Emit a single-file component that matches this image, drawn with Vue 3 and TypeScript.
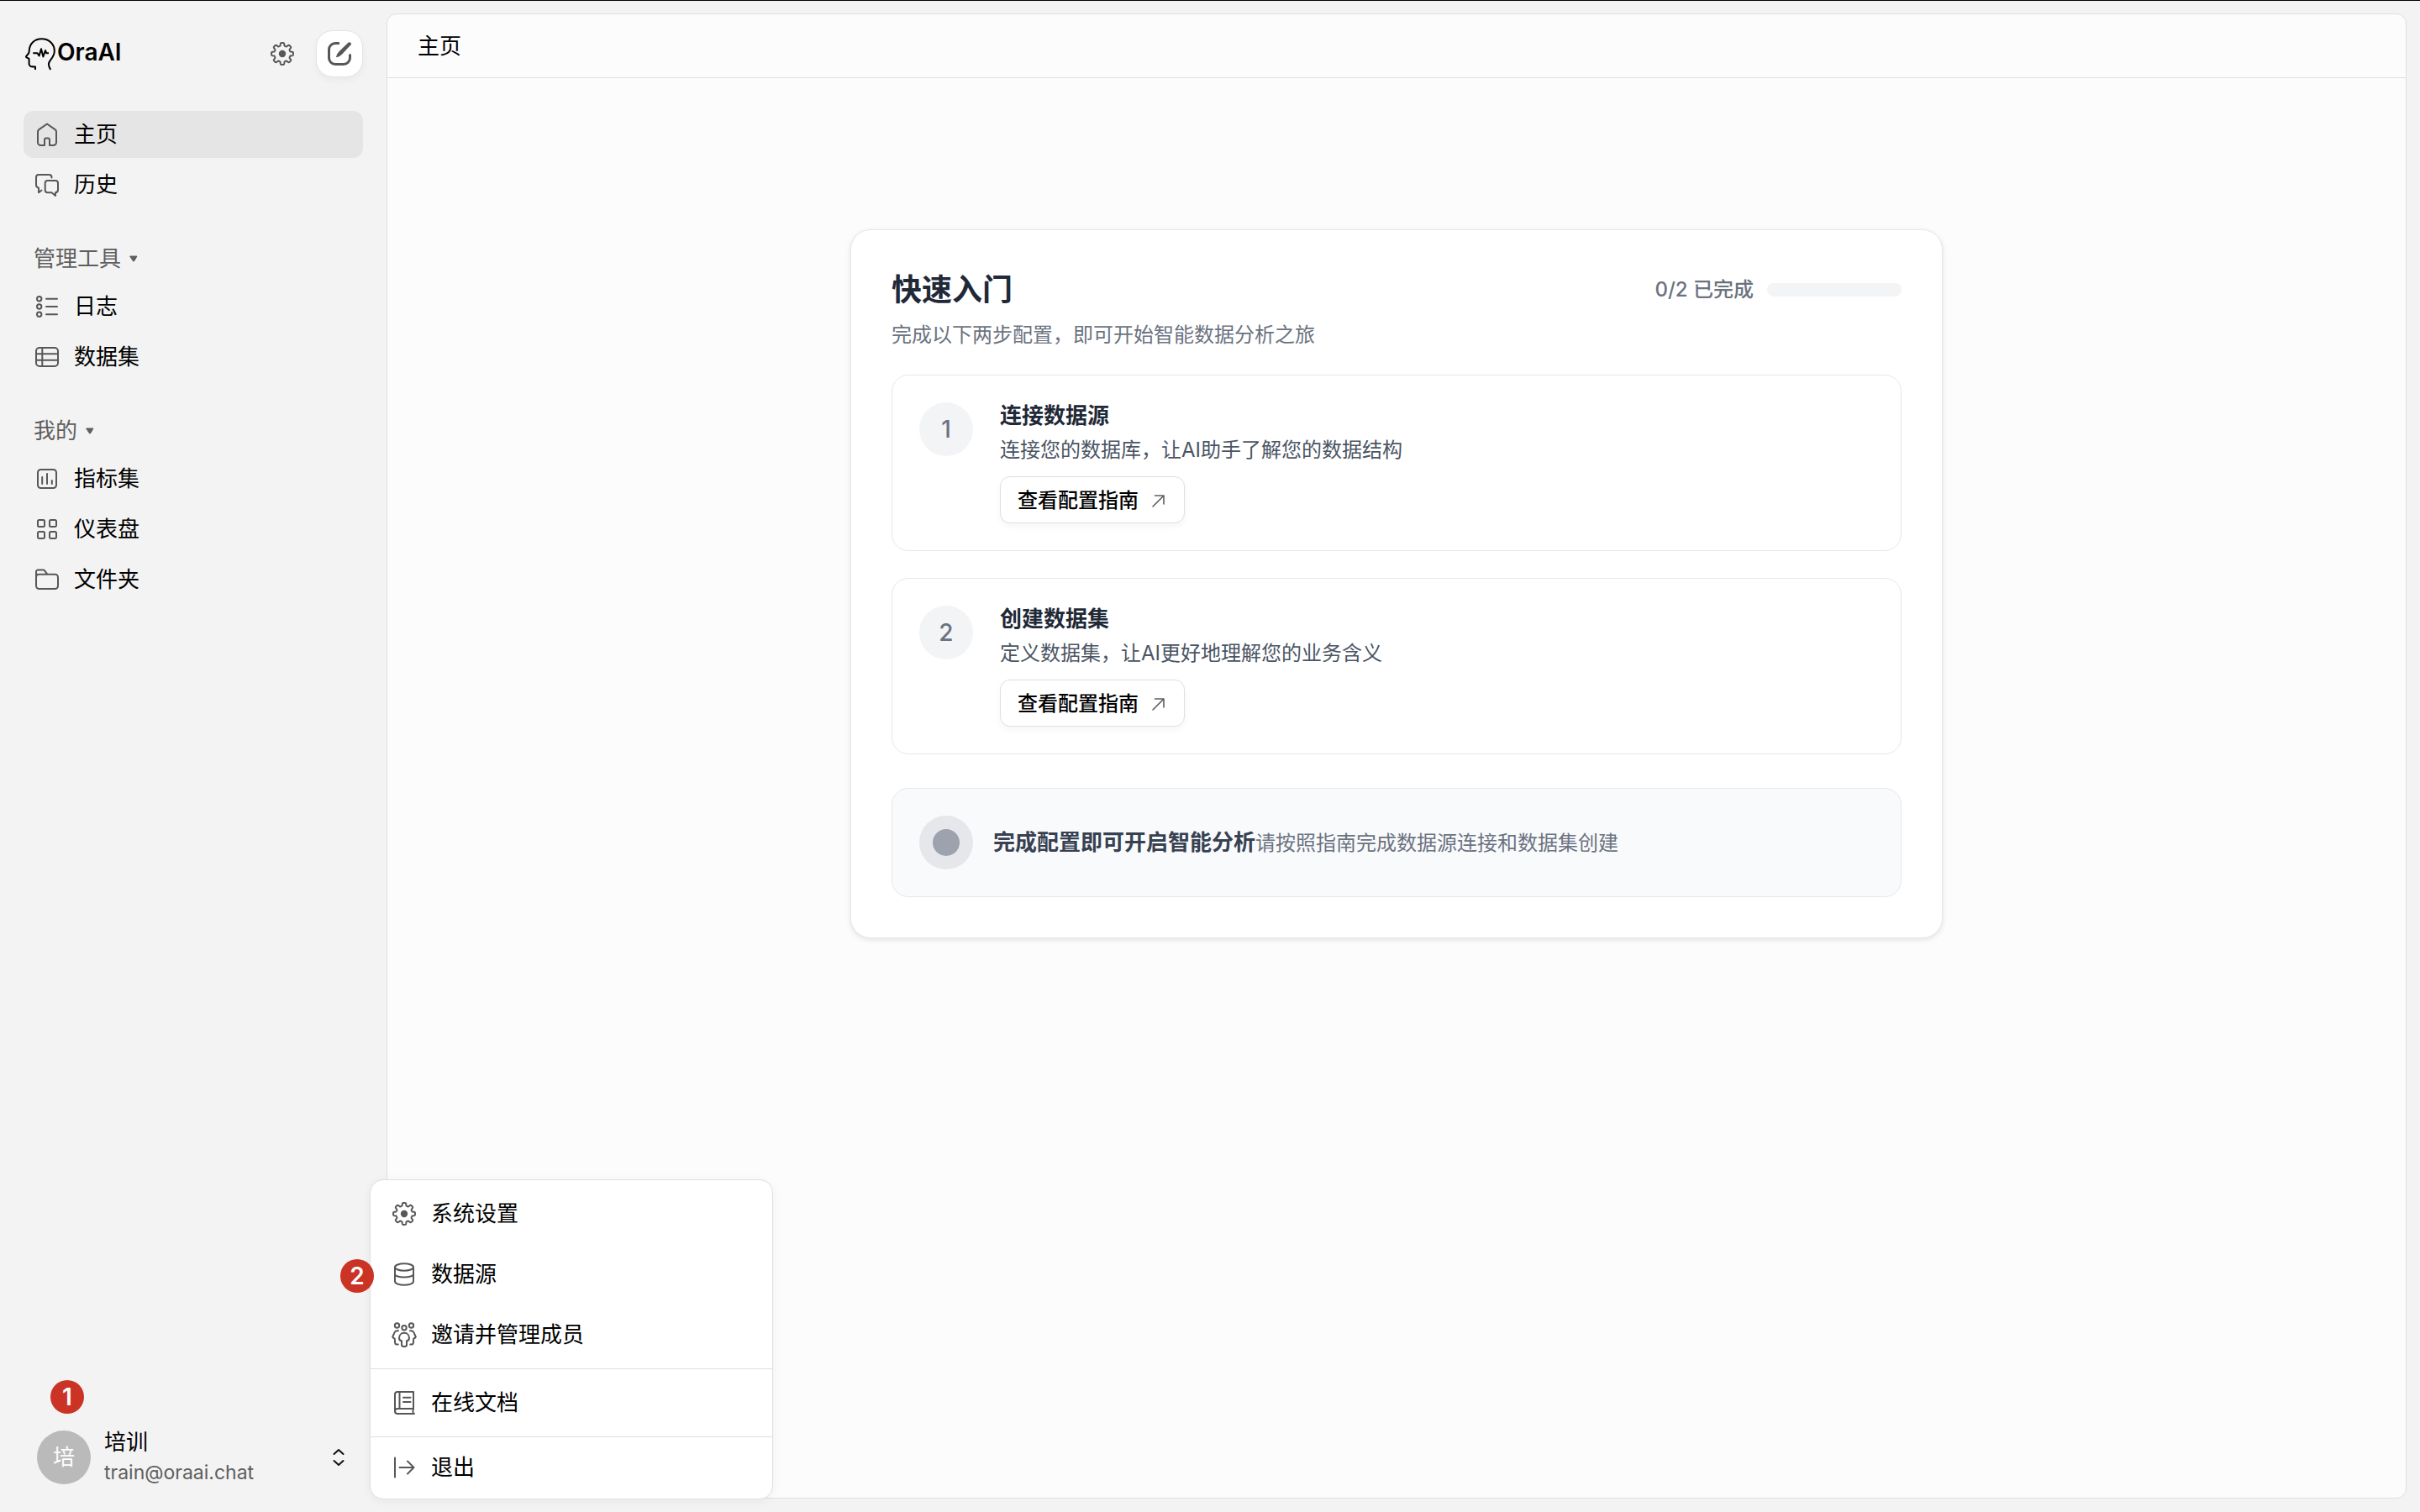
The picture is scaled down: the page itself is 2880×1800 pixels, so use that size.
<script setup lang="ts">
import { computed, ref } from 'vue'

interface NavItem {
  label: string
  icon: string[]
}

interface NavGroup {
  title?: string
  items: NavItem[]
}

interface MenuItem {
  label: string
  icon: string
  badge?: number
}

interface Step {
  title: string
  description: string
  done: boolean
}

const circle = (cx: number, cy: number, r: number): string =>
  `M${cx - r} ${cy}a${r} ${r} 0 1 0 ${2 * r} 0a${r} ${r} 0 1 0 ${-2 * r} 0z`

// Eight-toothed outline, traced in polar coordinates around (14, 14).
const gearOutline: string = (() => {
  const points: string[] = []
  const count = 192
  for (let i = 0; i < count; i++) {
    const angle = (i / count) * Math.PI * 2
    const radius = 11.3 + 1.7 * Math.tanh(2.6 * Math.cos(8 * angle) + 0.2)
    const x = 14 + radius * Math.sin(angle)
    const y = 14 - radius * Math.cos(angle)
    points.push(`${x.toFixed(2)} ${y.toFixed(2)}`)
  }
  return `M${points.join('L')}z`
})()

const groups: NavGroup[] = [
  {
    items: [
      {
        label: '主页',
        icon: ['M14 1.5L4.2 8.4Q3 9.3 3 10.8V23.5A3.5 3.5 0 0 0 6.5 27H11V20.5A2 2 0 0 1 13 18.5H15A2 2 0 0 1 17 20.5V27H21.5A3.5 3.5 0 0 0 25 23.5V10.8Q25 9.3 23.8 8.4Z'],
      },
      {
        label: '历史',
        icon: [
          'M19.5 5.5V5A3 3 0 0 0 16.5 2H4A3 3 0 0 0 1 5V14Q1 17 4 17.8V23.2L7.5 20.5',
          'M14.7 9H24A3 3 0 0 1 27 12V20Q27 23 24 23.3V27L19.5 23.3H14.7A3 3 0 0 1 11.7 20.3V12A3 3 0 0 1 14.7 9Z',
        ],
      },
    ],
  },
  {
    title: '管理工具',
    items: [
      {
        label: '日志',
        icon: [circle(4.7, 4.7, 2.7), circle(4.7, 14, 2.7), circle(4.7, 23.3, 2.7), 'M13 4.7H26M13 14H26M13 23.3H26'],
      },
      {
        label: '数据集',
        icon: ['M5 3H23A4 4 0 0 1 27 7V21A4 4 0 0 1 23 25H5A4 4 0 0 1 1 21V7A4 4 0 0 1 5 3ZM8.3 3V25M1 10.3H27M1 17.8H27'],
      },
    ],
  },
  {
    title: '我的',
    items: [
      {
        label: '指标集',
        icon: ['M6.5 3H21.5A3.5 3.5 0 0 1 25 6.5V21.5A3.5 3.5 0 0 1 21.5 25H6.5A3.5 3.5 0 0 1 3 21.5V6.5A3.5 3.5 0 0 1 6.5 3ZM8.2 12V20M14 8V20M19.8 16V20'],
      },
      {
        label: '仪表盘',
        icon: [
          'M4.5 3H9.5A1.5 1.5 0 0 1 11 4.5V9.5A1.5 1.5 0 0 1 9.5 11H4.5A1.5 1.5 0 0 1 3 9.5V4.5A1.5 1.5 0 0 1 4.5 3Z',
          'M18.5 3H23.5A1.5 1.5 0 0 1 25 4.5V9.5A1.5 1.5 0 0 1 23.5 11H18.5A1.5 1.5 0 0 1 17 9.5V4.5A1.5 1.5 0 0 1 18.5 3Z',
          'M4.5 17H9.5A1.5 1.5 0 0 1 11 18.5V23.5A1.5 1.5 0 0 1 9.5 25H4.5A1.5 1.5 0 0 1 3 23.5V18.5A1.5 1.5 0 0 1 4.5 17Z',
          'M18.5 17H23.5A1.5 1.5 0 0 1 25 18.5V23.5A1.5 1.5 0 0 1 23.5 25H18.5A1.5 1.5 0 0 1 17 23.5V18.5A1.5 1.5 0 0 1 18.5 17Z',
        ],
      },
      {
        label: '文件夹',
        icon: ['M1 11V4.5A2 2 0 0 1 3 2.5H9.5Q10.5 2.5 11.2 3.3L14.5 7.8M1 11Q1 7.8 4.2 7.8H23.5A3.5 3.5 0 0 1 27 11.3V21.5A3.5 3.5 0 0 1 23.5 25H4.5A3.5 3.5 0 0 1 1 21.5Z'],
      },
    ],
  },
]

const menuSections: MenuItem[][] = [
  [
    { label: '系统设置', icon: 'gear' },
    { label: '数据源', icon: 'database', badge: 2 },
    { label: '邀请并管理成员', icon: 'people' },
  ],
  [{ label: '在线文档', icon: 'book' }],
  [{ label: '退出', icon: 'exit' }],
]

const steps: Step[] = [
  { title: '连接数据源', description: '连接您的数据库，让AI助手了解您的数据结构', done: false },
  { title: '创建数据集', description: '定义数据集，让AI更好地理解您的业务含义', done: false },
]

const active = ref('主页')
const doneCount = computed(() => steps.filter((s) => s.done).length)
const progress = computed(() => `${(doneCount.value / steps.length) * 100}%`)
</script>

<template>
  <div class="app">
    <aside class="sidebar">
      <div class="brand-row">
        <a class="brand" href="#">
          <svg class="logo" viewBox="0 0 36 38" aria-hidden="true">
            <path d="M12 38V34.5Q8 34.5 6.5 34Q4.6 33.3 4.6 31V25.5Q4.6 24.6 3.5 24.3L1.5 23.4Q.6 22.8 1.3 21.8L4 18.5Q4.7 17.4 4.7 15.5C5 7 11 1.2 19.5 1.2C28.5 1.2 35 7.5 34.8 16C34.7 24 27.8 26.5 27.9 31.5Q28 34.5 30.2 38" />
            <path d="M9.3 18.3H14.5L16.6 21.5L19 13.2L21.4 22.5L24 15L25.3 18.3H28" />
          </svg>
          <span class="brand-name">OraAI</span>
        </a>
        <div class="brand-actions">
          <button class="icon-button" type="button" aria-label="设置">
            <svg class="icon" viewBox="0 0 28 28" aria-hidden="true">
              <path :d="gearOutline" />
              <circle class="solid" cx="14" cy="14" r="4.2" />
            </svg>
          </button>
          <button class="compose" type="button" aria-label="新建">
            <svg class="icon" viewBox="0 0 28 28" aria-hidden="true">
              <path class="thick" d="M12.8 1.5H9A7.5 7.5 0 0 0 1.5 9V19A7.5 7.5 0 0 0 9 26.5H19A7.5 7.5 0 0 0 26.5 19V15.5" />
              <path class="solid" d="M24.7 .6Q26 -.3 27.3 .8Q28.5 2 27.6 3.3L17.2 14.4Q14.3 17.4 10.9 18.2Q9.9 18.2 10.2 17Q11.2 13.5 13.8 10.9Z" />
            </svg>
          </button>
        </div>
      </div>

      <nav class="nav">
        <section v-for="(group, g) in groups" :key="g" class="group">
          <button v-if="group.title" class="group-title" type="button">
            <span>{{ group.title }}</span>
            <svg class="caret" viewBox="0 0 10 8" aria-hidden="true">
              <path d="M1 1H9L5.8 6.6Q5 7.8 4.2 6.6Z" />
            </svg>
          </button>
          <a
            v-for="item in group.items"
            :key="item.label"
            href="#"
            class="nav-item"
            :class="{ active: item.label === active }"
            @click.prevent="active = item.label"
          >
            <svg class="icon" viewBox="0 0 28 28" aria-hidden="true">
              <path v-for="(d, i) in item.icon" :key="i" :d="d" />
            </svg>
            <span>{{ item.label }}</span>
          </a>
        </section>
      </nav>

      <div class="account">
        <span class="badge account-badge">1</span>
        <button class="user" type="button">
          <span class="avatar">培</span>
          <span class="identity">
            <span class="name">培训</span>
            <span class="email">train@oraai.chat</span>
          </span>
          <svg class="updown" viewBox="0 0 14 22" aria-hidden="true">
            <path d="M1.5 7L7 2L12.5 7M1.5 15L7 20L12.5 15" />
          </svg>
        </button>

        <div class="menu" role="menu">
          <div v-for="(section, s) in menuSections" :key="s" class="menu-section">
            <button v-for="entry in section" :key="entry.label" class="menu-item" type="button" role="menuitem">
              <svg v-if="entry.icon === 'gear'" class="icon" viewBox="0 0 28 28" aria-hidden="true">
                <path :d="gearOutline" />
                <circle class="solid" cx="14" cy="14" r="4.2" />
              </svg>
              <svg v-else-if="entry.icon === 'database'" class="icon" viewBox="0 0 28 28" aria-hidden="true">
                <ellipse cx="14" cy="5.5" rx="11" ry="4.2" />
                <path d="M3 5.5V22.5C3 25 8 26.8 14 26.8S25 25 25 22.5V5.5M3 14C3 16 8 17.6 14 17.6S25 16 25 14" />
              </svg>
              <svg v-else-if="entry.icon === 'people'" class="icon wide" viewBox="0 0 30 30" aria-hidden="true">
                <circle cx="6.5" cy="4" r="2.7" />
                <circle cx="23.5" cy="4" r="2.7" />
                <circle cx="15" cy="6.7" r="2.7" />
                <path d="M15 12.8C11 12.8 9 16 9 19Q9 22 12 22.3V27.2Q12 29 15 29T18 27.2V22.3Q21 22 21 19C21 16 19 12.8 15 12.8Z" />
                <path d="M8 10.2C4 9.8 3.5 12 2.6 14.5L1.2 17.5Q2 19.3 3.7 19.5L4.2 25Q4.5 27 7.8 26.5" />
                <path d="M22 10.2C26 9.8 26.5 12 27.4 14.5L28.8 17.5Q28 19.3 26.3 19.5L25.8 25Q25.5 27 22.2 26.5" />
              </svg>
              <svg v-else-if="entry.icon === 'book'" class="icon" viewBox="0 0 28 28" aria-hidden="true">
                <path d="M26 27H6A3 3 0 0 1 3 24V4A3 3 0 0 1 6 1H25V21M8.5 1V21M3 24Q3 21 6 21H25Q23.8 24 25 27M13 7.7H21.5M13 13H21.5" />
              </svg>
              <svg v-else class="icon" viewBox="0 0 28 28" aria-hidden="true">
                <path d="M3 2.5V25.5M8.5 14H25.5M18 6.5L25.5 14L18 21.5" />
              </svg>
              <span>{{ entry.label }}</span>
              <span v-if="entry.badge" class="badge menu-badge">{{ entry.badge }}</span>
            </button>
          </div>
        </div>
      </div>
    </aside>

    <main class="panel">
      <header class="panel-header">主页</header>
      <div class="panel-body">
        <section class="card">
          <div class="card-head">
            <h1>快速入门</h1>
            <div class="progress">
              <span>{{ doneCount }}/{{ steps.length }} 已完成</span>
              <div class="track" role="progressbar" aria-label="已完成" aria-valuemin="0" :aria-valuemax="steps.length" :aria-valuenow="doneCount">
                <div class="fill" :style="{ width: progress }"></div>
              </div>
            </div>
          </div>
          <p class="intro">完成以下两步配置，即可开始智能数据分析之旅</p>

          <ol class="steps">
            <li v-for="(step, i) in steps" :key="step.title" class="step">
              <span class="number">{{ i + 1 }}</span>
              <div class="step-body">
                <h2>{{ step.title }}</h2>
                <p>{{ step.description }}</p>
                <button class="guide" type="button">
                  <span>查看配置指南</span>
                  <svg class="arrow" viewBox="0 0 16 16" aria-hidden="true">
                    <path d="M1 15L14 2M3.5 2H14V12" />
                  </svg>
                </button>
              </div>
            </li>
          </ol>

          <div class="ready">
            <span class="dot"></span>
            <p><strong>完成配置即可开启智能分析</strong><span>请按照指南完成数据源连接和数据集创建</span></p>
          </div>
        </section>
      </div>
    </main>
  </div>
</template>

<style>
body {
  margin: 0;
}
</style>

<style scoped>
.app {
  box-sizing: border-box;
  display: flex;
  min-height: 100vh;
  border-top: 1px solid #000;
  background: #f3f3f3;
  color: #000;
  font-family: Inter, "Noto Sans CJK SC", sans-serif;
  font-size: 26px;
  line-height: 32px;
}

.app *,
.app *::before {
  box-sizing: border-box;
}

button {
  margin: 0;
  padding: 0;
  border: 0;
  background: none;
  color: inherit;
  font: inherit;
  text-align: left;
  cursor: pointer;
}

a {
  color: inherit;
  text-decoration: none;
}

h1,
h2,
p,
ol {
  margin: 0;
  padding: 0;
}

svg {
  flex: none;
  overflow: visible;
  fill: none;
  stroke-linecap: round;
  stroke-linejoin: round;
}

.icon {
  width: 28px;
  height: 28px;
  stroke: #575757;
  stroke-width: 2;
}

.icon.wide {
  width: 30px;
  height: 30px;
  margin: 0 -1px;
}

.icon .solid {
  fill: #575757;
  stroke: none;
}

.icon .thick {
  stroke-width: 3;
}

/* Sidebar */
.sidebar {
  display: flex;
  flex: none;
  flex-direction: column;
  width: 460px;
  padding: 35px 28px 31px;
}

.brand-row {
  display: flex;
  align-items: center;
  justify-content: space-between;
  height: 56px;
  padding-left: 2px;
}

.brand {
  display: flex;
  align-items: center;
  gap: 2px;
  font-size: 28px;
  font-weight: 600;
}

.brand-name {
  padding-bottom: 4px;
}

.logo {
  width: 36px;
  height: 38px;
  stroke: #000;
  stroke-width: 2;
  stroke-linecap: butt;
}

.brand-actions {
  display: flex;
  align-items: center;
  gap: 26px;
}

.icon-button {
  display: flex;
}

.compose {
  display: flex;
  align-items: center;
  justify-content: center;
  width: 56px;
  height: 56px;
  border: 1px solid #e4e4e4;
  border-radius: 20px;
  background: #fff;
  box-shadow: 0 4px 8px rgba(0, 0, 0, 0.04);
}

.nav {
  display: flex;
  flex-direction: column;
  gap: 32px;
  margin-top: 40px;
}

.group {
  display: flex;
  flex-direction: column;
  gap: 4px;
}

.group-title {
  display: flex;
  align-items: center;
  gap: 10px;
  height: 53px;
  padding: 3px 0 0 12px;
  color: #5e5e5e;
}

.caret {
  width: 10px;
  height: 8px;
  fill: #5e5e5e;
  stroke: #5e5e5e;
}

.nav-item {
  display: flex;
  align-items: center;
  gap: 18px;
  height: 56px;
  padding: 0 14px;
  border-radius: 12px;
}

.nav-item.active {
  background: #e5e5e5;
}

.account {
  position: relative;
  margin-top: auto;
}

.user {
  display: flex;
  align-items: center;
  width: 100%;
  padding: 0 22px 0 16px;
}

.avatar {
  display: flex;
  align-items: center;
  justify-content: center;
  width: 64px;
  height: 64px;
  border-radius: 50%;
  background: #bababa;
  color: #fff;
}

.identity {
  display: flex;
  flex: 1;
  flex-direction: column;
  gap: 4px;
  margin-left: 16px;
}

.email {
  color: #5e5e5e;
  font-size: 23px;
}

.updown {
  width: 14px;
  height: 22px;
  stroke: #111;
  stroke-width: 2;
}

.badge {
  position: absolute;
  display: flex;
  align-items: center;
  justify-content: center;
  width: 40px;
  height: 40px;
  border-radius: 50%;
  background: #cb3425;
  color: #fff;
  font-size: 28px;
  font-weight: 600;
}

.account-badge {
  bottom: 86px;
  left: 32px;
}

.menu-badge {
  top: 18px;
  left: -36px;
}

.menu {
  position: absolute;
  bottom: -16px;
  left: 412px;
  width: 480px;
  border: 1px solid #dfdfdf;
  border-radius: 16px;
  background: #fff;
  box-shadow: 0 2px 12px rgba(0, 0, 0, 0.05);
}

.menu-section {
  padding: 4px 0;
}

.menu-section + .menu-section {
  border-top: 1px solid #dfdfdf;
}

.menu-section:last-child {
  padding: 0 0 1px;
}

.menu-item {
  position: relative;
  display: flex;
  align-items: center;
  gap: 18px;
  width: 100%;
  height: 72px;
  padding: 0 26px;
}

/* Main panel */
.panel {
  flex: 1;
  min-width: 0;
  margin: 15px 16px 16px 0;
  border: 1px solid #dfdfdf;
  border-radius: 12px;
  background: #fcfcfc;
}

.panel-header {
  height: 76px;
  padding: 22px 36px;
  border-bottom: 1px solid #dfdfdf;
}

.panel-body {
  padding: 180px 48px 48px;
}

.card {
  max-width: 1300px;
  margin: 0 auto;
  padding: 49px 48px 48px;
  border: 1px solid #e5e7eb;
  border-radius: 24px;
  background: #fff;
  box-shadow: 0 2px 6px rgba(0, 0, 0, 0.1);
}

.card-head {
  display: flex;
  align-items: center;
  justify-content: space-between;
}

h1 {
  color: #1f2937;
  font-size: 36px;
  font-weight: 600;
  line-height: 44px;
}

.progress {
  display: flex;
  align-items: center;
  gap: 16px;
  color: #6b7280;
  font-size: 24px;
  font-weight: 500;
}

.track {
  width: 160px;
  height: 16px;
  overflow: hidden;
  border-radius: 8px;
  background: #f3f4f6;
}

.fill {
  height: 100%;
  background: #1f2937;
}

.intro {
  margin-top: 12px;
  color: #6b7280;
  font-size: 24px;
  line-height: 40px;
}

.steps {
  display: flex;
  flex-direction: column;
  gap: 32px;
  margin-top: 27px;
  list-style: none;
}

.step {
  display: flex;
  gap: 32px;
  padding: 32px;
  border: 1px solid #e5e7eb;
  border-radius: 20px;
}

.number {
  display: flex;
  flex: none;
  align-items: center;
  justify-content: center;
  width: 64px;
  height: 64px;
  border-radius: 50%;
  background: #f3f4f6;
  color: #6b7280;
  font-size: 28px;
  font-weight: 500;
}

h2 {
  color: #1f2937;
  font-size: 26px;
  font-weight: 600;
  line-height: 32px;
}

.step-body p {
  margin-top: 5px;
  color: #4b5563;
  font-size: 24px;
  line-height: 40px;
}

.guide {
  display: flex;
  align-items: center;
  gap: 16px;
  height: 56px;
  margin-top: 11px;
  padding: 1px 22px 0 20px;
  border: 1px solid #dfdfdf;
  border-radius: 12px;
  background: #fff;
  box-shadow: 0 4px 8px rgba(0, 0, 0, 0.04);
  font-size: 24px;
  font-weight: 500;
}

.arrow {
  width: 16px;
  height: 16px;
  stroke: #5e5e5e;
  stroke-width: 1.6;
}

.ready {
  display: flex;
  align-items: center;
  gap: 24px;
  margin-top: 40px;
  padding: 32px;
  border: 1px solid #e5e7eb;
  border-radius: 20px;
  background: #f9fafc;
}

.dot {
  display: flex;
  flex: none;
  align-items: center;
  justify-content: center;
  width: 64px;
  height: 64px;
  border-radius: 50%;
  background: #e5e7eb;
}

.dot::before {
  width: 32px;
  height: 32px;
  border-radius: 50%;
  background: #9ca3af;
  content: "";
}

.ready strong {
  color: #374151;
  font-weight: 600;
}

.ready p span {
  color: #6b7280;
  font-size: 24px;
}
</style>
